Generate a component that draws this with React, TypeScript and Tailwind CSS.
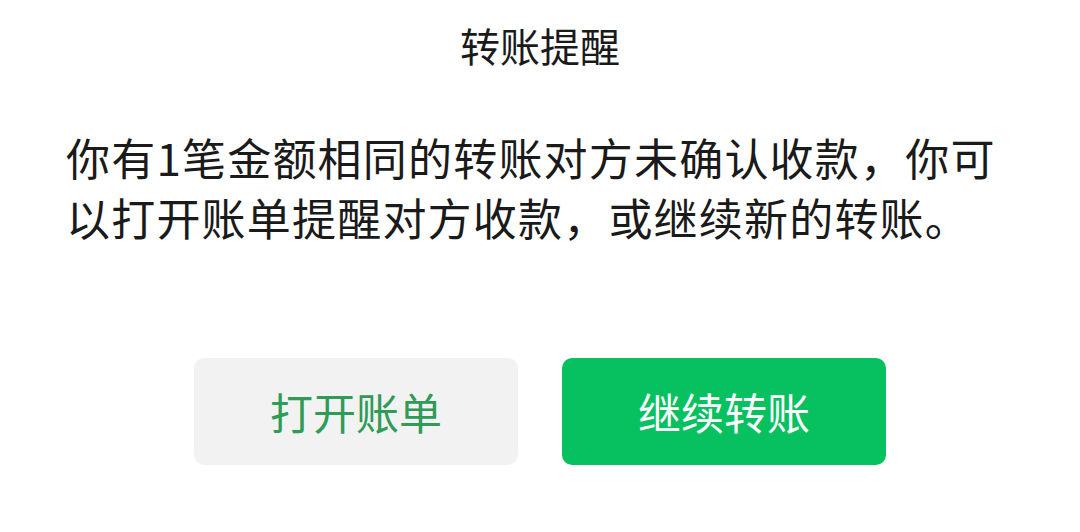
export default function App() {
  return (
    <div
      className="w-[1080px] h-[532px] bg-white flex flex-col items-center"
      style={{ fontFamily: '"Noto Sans CJK SC", "Noto Sans", sans-serif' }}
    >
      {/* Title */}
      <h1 className="mt-[17px] h-[56px] leading-[56px] text-[40px] text-[#1a1a1a] font-normal">
        转账提醒
      </h1>

      {/* Message */}
      <p className="mt-[54px] w-full pl-[66px] text-[44px] leading-[60px] tracking-[1.2px] text-[#1a1a1a] whitespace-nowrap">
        你有1笔金额相同的转账对方未确认收款，你可
        <br />
        以打开账单提醒对方收款，或继续新的转账。
      </p>

      {/* Actions */}
      <div className="mt-[111px] flex gap-[44px]">
        <button className="w-[324px] h-[107px] rounded-[10px] bg-[#f2f2f2] text-[#2e9b57] text-[43px]">
          打开账单
        </button>
        <button className="w-[324px] h-[107px] rounded-[10px] bg-[#07c160] text-white text-[43px]">
          继续转账
        </button>
      </div>
    </div>
  );
}
